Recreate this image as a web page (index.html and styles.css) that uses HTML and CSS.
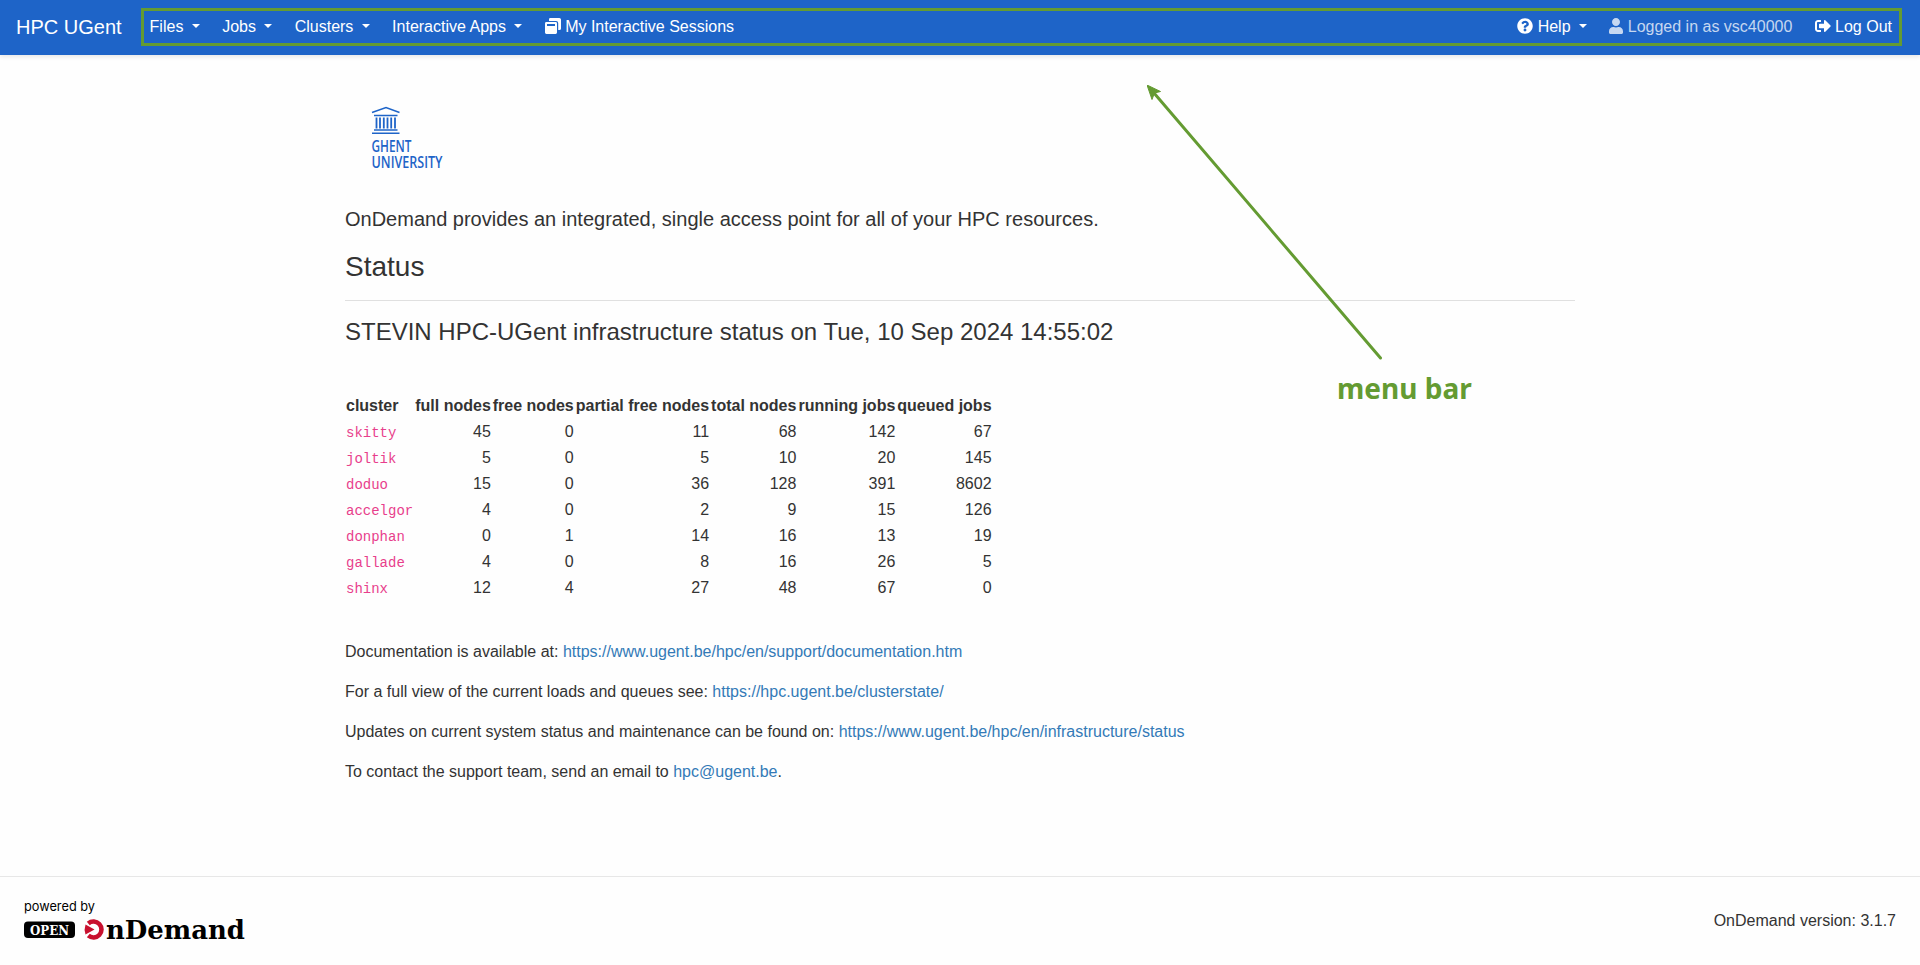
FILE: index.html
```html
<!DOCTYPE html>
<html lang="en">
<head>
<meta charset="utf-8">
<title>Dashboard - HPC UGent</title>
<link rel="stylesheet" href="styles.css">
</head>
<body>
<header class="navbar">
  <a class="brand">HPC UGent</a>
  <nav class="nav">
    <a class="nav-link">Files <span class="caret"></span></a>
    <a class="nav-link">Jobs <span class="caret"></span></a>
    <a class="nav-link">Clusters <span class="caret"></span></a>
    <a class="nav-link">Interactive Apps <span class="caret"></span></a>
    <a class="nav-link"><svg class="icon" viewBox="0 0 16 16"><path d="M5.2 0H14.4Q16 0 16 1.6V10.4Q16 12 14.4 12H13.2V5Q13.2 2.9 11 2.9H4V1.4Q4 0 5.2 0Z"/><path fill-rule="evenodd" d="M1.4 4H10.6Q12 4 12 5.4V14.6Q12 16 10.6 16H1.4Q0 16 0 14.6V5.4Q0 4 1.4 4ZM2 6V8H10V6Z"/></svg> My Interactive Sessions</a>
  </nav>
  <nav class="nav nav-right">
    <a class="nav-link"><svg class="icon" viewBox="0 0 512 512"><path d="M504 256c0 137-111 248-248 248S8 393 8 256 119 8 256 8s248 111 248 248zM262.700 90c-54.500 0-89.300 23-116.500 63.800-3.500 5.300-2.400 12.400 2.700 16.300l34.700 26.300c5.200 3.900 12.600 3 16.700-2.100 17.900-22.700 30.100-35.800 57.300-35.800 20.400 0 45.700 13.100 45.700 33 0 15-12.400 22.700-32.500 34C247.100 238.500 216 254.900 216 296v4c0 6.600 5.400 12 12 12h56c6.600 0 12-5.400 12-12v-1.300c0-28.500 83.200-29.600 83.200-106.700 0-58-60.200-102-116.500-102zM256 338c-25.400 0-46 20.600-46 46s20.600 46 46 46 46-20.600 46-46-20.600-46-46-46z"/></svg> Help <span class="caret"></span></a>
    <a class="nav-link muted"><svg class="icon icon-user" viewBox="0 0 448 512"><path d="M224 256c70.700 0 128-57.300 128-128S294.700 0 224 0 96 57.300 96 128s57.300 128 128 128zm89.600 32h-16.700c-22.200 10.200-46.900 16-72.900 16s-50.600-5.800-72.900-16h-16.700C60.200 288 0 348.200 0 422.400V464c0 26.500 21.500 48 48 48h352c26.500 0 48-21.500 48-48v-41.600c0-74.200-60.200-134.400-134.400-134.400z"/></svg> Logged in as vsc40000</a>
    <a class="nav-link"><svg class="icon" viewBox="0 0 512 512"><path d="M497 273L329 441c-15 15-41 4.500-41-17v-96H152c-13.300 0-24-10.700-24-24v-96c0-13.300 10.700-24 24-24h136V88c0-21.400 25.900-32 41-17l168 168c9.300 9.400 9.300 24.600 0 34zM192 436v-40c0-6.600-5.400-12-12-12H96c-17.700 0-32-14.300-32-32V160c0-17.700 14.300-32 32-32h84c6.600 0 12-5.400 12-12V76c0-6.600-5.400-12-12-12H96c-53 0-96 43-96 96v192c0 53 43 96 96 96h84c6.600 0 12-5.400 12-12z"/></svg> Log Out</a>
  </nav>
</header>

<main class="content">
  <svg class="ugent-logo" viewBox="0 0 120 80" width="120" height="80">
    <path class="logo-line" d="M27 14.500 41 9.500 54.500 14.500M29 17.500H52.500M29 32H52.500M27 35.300H54.500"/>
    <path class="logo-columns" d="M31.500 19.500V30.500M35 19.500V30.500M38.800 19.500V30.500M42.500 19.500V30.500M46.200 19.500V30.500M50 19.500V30.500"/>
    <text class="logo-text" x="26.500" y="54" textLength="40" lengthAdjust="spacingAndGlyphs">GHENT</text>
    <text class="logo-text" x="26.500" y="70" textLength="71" lengthAdjust="spacingAndGlyphs">UNIVERSITY</text>
  </svg>
  <p class="lead">OnDemand provides an integrated, single access point for all of your HPC resources.</p>
  <h2 class="section-title">Status</h2>
  <hr class="rule">
  <h4 class="status-title">STEVIN HPC-UGent infrastructure status on Tue, 10 Sep 2024 14:55:02</h4>
  <table class="clusters">
    <thead><tr><th>cluster</th><th>full nodes</th><th>free nodes</th><th>partial free nodes</th><th>total nodes</th><th>running jobs</th><th>queued jobs</th></tr></thead>
    <tbody>
      <tr><td><code>skitty</code></td><td>45</td><td>0</td><td>11</td><td>68</td><td>142</td><td>67</td></tr>
      <tr><td><code>joltik</code></td><td>5</td><td>0</td><td>5</td><td>10</td><td>20</td><td>145</td></tr>
      <tr><td><code>doduo</code></td><td>15</td><td>0</td><td>36</td><td>128</td><td>391</td><td>8602</td></tr>
      <tr><td><code>accelgor</code></td><td>4</td><td>0</td><td>2</td><td>9</td><td>15</td><td>126</td></tr>
      <tr><td><code>donphan</code></td><td>0</td><td>1</td><td>14</td><td>16</td><td>13</td><td>19</td></tr>
      <tr><td><code>gallade</code></td><td>4</td><td>0</td><td>8</td><td>16</td><td>26</td><td>5</td></tr>
      <tr><td><code>shinx</code></td><td>12</td><td>4</td><td>27</td><td>48</td><td>67</td><td>0</td></tr>
    </tbody>
  </table>
  <p class="info">Documentation is available at: <a class="link">https://www.ugent.be/hpc/en/support/documentation.htm</a></p>
  <p class="info">For a full view of the current loads and queues see: <a class="link">https://hpc.ugent.be/clusterstate/</a></p>
  <p class="info">Updates on current system status and maintenance can be found on: <a class="link">https://www.ugent.be/hpc/en/infrastructure/status</a></p>
  <p class="info">To contact the support team, send an email to <a class="link">hpc@ugent.be</a>.</p>
</main>

<footer class="footer">
  <svg class="ood-logo" viewBox="0 0 224 44" width="224" height="44">
    <text class="powered" x="0" y="12" textLength="71" lengthAdjust="spacingAndGlyphs">powered by</text>
    <rect x="0" y="22.500" width="51" height="16.500" rx="4"/>
    <text class="open" x="6" y="35.500" textLength="39" lengthAdjust="spacingAndGlyphs">OPEN</text>
    <path class="ring" d="M64.300 24.400A8 8 0 1 1 64.300 36.600"/>
    <path class="play" d="M61.500 25.500 70.500 30.500 61.500 35.500Q59.800 30.500 61.500 25.500Z"/>
    <text class="demand" x="82" y="40" textLength="139" lengthAdjust="spacingAndGlyphs">nDemand</text>
  </svg>
  <span class="version">OnDemand version: 3.1.7</span>
</footer>

<div class="callout-box"></div>
<svg class="callout-arrow" viewBox="0 0 240 280" width="240" height="280">
  <path class="arrow-line" d="M7 8 233.500 273"/>
  <path class="arrow-head" d="M0 0 13.500 6.500 7.500 8 5 14.500Z"/>
</svg>
<div class="callout-label">menu bar</div>
</body>
</html>
```
FILE: styles.css
```css
* { box-sizing: border-box; }

body {
  margin: 0;
  min-height: 965px;
  display: flex;
  flex-direction: column;
  position: relative;
  background: #fefefe;
  color: #333;
  font: 16px/24px "Liberation Sans", Arial, sans-serif;
}

.navbar {
  height: 55px;
  padding: 0 28px 1px 16px;
  display: flex;
  align-items: center;
  background: #1e64c8;
  color: #fff;
  box-shadow: 0 2px 4px rgba(0, 0, 0, .09);
}
.brand { font-size: 20px; line-height: 30px; margin-right: 28px; }
.nav { display: flex; gap: 22.300px; }
.nav-right { margin-left: auto; }
.nav-link { white-space: nowrap; }
.muted { color: rgba(255, 255, 255, .75); }
.caret {
  display: inline-block;
  margin-left: 4px;
  vertical-align: 4px;
  border-top: 4.800px solid;
  border-left: 4.800px solid transparent;
  border-right: 4.800px solid transparent;
}
.icon { width: 16px; height: 16px; vertical-align: -2px; fill: currentColor; }
.icon-user { width: 14px; }

.content { width: 1230px; margin: 0 auto; padding-top: 43px; }
.ugent-logo { display: block; margin-bottom: 26px; }
.logo-line { fill: none; stroke: #1e64c8; stroke-width: 1.500; }
.logo-columns { fill: none; stroke: #1e64c8; stroke-width: 1.800; }
.logo-text { font: 600 16px "Open Sans", sans-serif; fill: #1e64c8; }
.lead { margin: 0 0 16px; font-size: 20px; line-height: 30px; }
.section-title { margin: 0; font-size: 28px; font-weight: 400; line-height: 34px; }
.rule { height: 1px; margin: 16px 0; border: 0; background: #e0e0e0; }
.status-title { margin: 0; font-size: 24px; font-weight: 400; line-height: 29px; }

.clusters { margin: 47px 0 39px; border-collapse: collapse; }
.clusters th, .clusters td { padding: 1px; text-align: right; white-space: nowrap; }
.clusters th:first-child, .clusters td:first-child { text-align: left; }
.clusters code { font: 14px "Liberation Mono", monospace; color: #e83e8c; }

.info { margin: 0 0 16px; }
.link { color: #337ab7; }

.footer {
  height: 89px;
  margin-top: auto;
  padding: 0 24px;
  display: flex;
  align-items: center;
  justify-content: space-between;
  border-top: 1px solid #e7e7e7;
}
.powered { font: 13px Inter, sans-serif; }
.open { font: bold 13px "DejaVu Serif", serif; fill: #fff; }
.demand { font: bold 26px "DejaVu Serif", serif; }
.ring { fill: none; stroke: #c8102e; stroke-width: 4.600; }
.play { fill: #c8102e; }

.callout-box {
  position: absolute;
  left: 141px;
  top: 8px;
  width: 1761px;
  height: 38px;
  border: 3px solid #649b32;
}
.callout-arrow { position: absolute; left: 1147px; top: 85px; }
.arrow-line { stroke: #649b32; stroke-width: 3; stroke-linecap: round; }
.arrow-head { fill: #649b32; stroke: #649b32; }
.callout-label {
  position: absolute;
  left: 1337px;
  top: 368px;
  font: bold 28px/40px "Noto Sans", sans-serif;
  color: #649b32;
}
```
